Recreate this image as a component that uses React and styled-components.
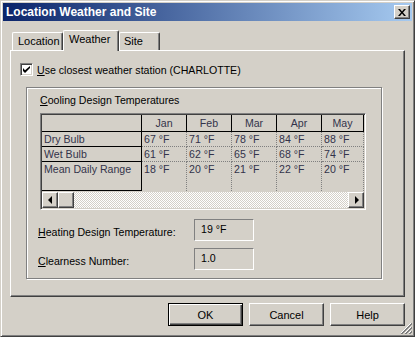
import React from "react";
import styled, { createGlobalStyle, css } from "styled-components";

const face = "#D4D0C8";
const shadow = "#808080";
const dark = "#404040";

const GlobalStyle = createGlobalStyle`
  html, body {
    margin: 0;
    padding: 0;
    background: ${face};
  }
  body {
    font-family: "Liberation Sans", Arial, sans-serif;
    font-size: 10.6px;
    color: #000;
  }
`;

const raised = css`
  background: ${face};
  border: 1px solid;
  border-color: #fff ${dark} ${dark} #fff;
  box-shadow: inset -1px -1px ${shadow};
`;

const months = ["Jan", "Feb", "Mar", "Apr", "May"];
const rows = [
  { label: "Dry Bulb", values: ["67 °F", "71 °F", "78 °F", "84 °F", "88 °F"] },
  { label: "Wet Bulb", values: ["61 °F", "62 °F", "65 °F", "68 °F", "74 °F"] },
  { label: "Mean Daily Range", values: ["18 °F", "20 °F", "21 °F", "22 °F", "20 °F"], tall: true },
];

export default function App() {
  return (
    <>
      <GlobalStyle />
      <Window>
        <TitleBar>
          <Title>Location Weather and Site</Title>
          <CloseButton>
            <svg width="8" height="7" viewBox="0 0 8 7">
              <path d="M0 0h2l2 2.5L6 0h2L5 3.5 8 7H6L4 4.5 2 7H0l3-3.5z" fill="#000" />
            </svg>
          </CloseButton>
        </TitleBar>

        <Body>
          <TabStrip>
            <Tab $width={51}>Location</Tab>
            <Tab $width={56} $active>Weather</Tab>
            <Tab $width={41} $pad={4}>Site</Tab>
          </TabStrip>

          <TabPanel>
            <CheckRow>
              <CheckBox>
                <svg width="7" height="7" viewBox="0 0 7 7">
                  <path d="M0 2v3l2 2 5-5V-0L2 4.2z" fill="#000" />
                </svg>
              </CheckBox>
              <span>
                <u>U</u>se closest weather station (CHARLOTTE)
              </span>
            </CheckRow>

            <GroupBox>
              <Caption>
                <u>C</u>ooling Design Temperatures
              </Caption>

              <GridFrame>
                <GridBody>
                  <HeaderCell $corner />
                  {months.map((m) => (
                    <HeaderCell key={m}>{m}</HeaderCell>
                  ))}
                  {rows.map((r, i) => (
                    <React.Fragment key={r.label}>
                      <RowHeader $tall={r.tall}>{r.label}</RowHeader>
                      {r.values.map((v, j) => (
                        <DataCell key={j} $last={i === rows.length - 1}>
                          {v}
                        </DataCell>
                      ))}
                    </React.Fragment>
                  ))}
                </GridBody>
                <ScrollBar>
                  <ScrollButton>
                    <Arrow $dir="left" />
                  </ScrollButton>
                  <ScrollButton />
                  <ScrollTrack />
                  <ScrollButton>
                    <Arrow $dir="right" />
                  </ScrollButton>
                </ScrollBar>
              </GridFrame>

              <Fields>
                <FieldLabel>
                  <u>H</u>eating Design Temperature:
                </FieldLabel>
                <FieldValue>19 °F</FieldValue>
                <FieldLabel>
                  <u>C</u>learness Number:
                </FieldLabel>
                <FieldValue>1.0</FieldValue>
              </Fields>
            </GroupBox>
          </TabPanel>

          <ButtonRow>
            <Button $default>OK</Button>
            <Button>Cancel</Button>
            <Button>Help</Button>
          </ButtonRow>
        </Body>

        <SizeGrip>
          <svg width="12" height="12" viewBox="0 0 12 12">
            <path d="M11 1L1 11M11 5L5 11M11 9L9 11" stroke="#fff" strokeWidth="1" />
            <path d="M12 1L1 12M12 2L2 12M12 5L5 12M12 6L6 12M12 9L9 12M12 10L10 12" stroke={shadow} strokeWidth="1" />
          </svg>
        </SizeGrip>
      </Window>
    </>
  );
}

const Window = styled("div")`
  position: relative;
  box-sizing: border-box;
  width: 415px;
  height: 337px;
  padding: 2px;
  background: ${face};
  border: 1px solid;
  border-color: ${face} ${dark} ${dark} ${face};
  box-shadow: inset 1px 1px #fff, inset -1px -1px ${shadow};
  display: flex;
  flex-direction: column;
`;

const TitleBar = styled("div")`
  height: 18px;
  display: flex;
  align-items: center;
  justify-content: space-between;
  padding: 0 2px 0 3px;
  background: linear-gradient(to right, #0a246a, #a6caf0);
`;

const Title = styled("span")`
  color: #fff;
  font-weight: bold;
  font-size: 12px;
  white-space: nowrap;
`;

const CloseButton = styled("div")`
  ${raised};
  box-sizing: border-box;
  width: 16px;
  height: 14px;
  display: flex;
  align-items: center;
  justify-content: center;
`;

const Body = styled("div")`
  flex: 1;
  display: flex;
  flex-direction: column;
  padding: 9px 7px 0 7px;
`;

const TabStrip = styled("div")`
  display: flex;
  align-items: flex-end;
  padding-left: 2px;
  height: 20px;
`;

const Tab = styled("div")`
  box-sizing: border-box;
  width: ${(p) => p.$width}px;
  height: ${(p) => (p.$active ? 21 : 18)}px;
  padding: 2px 0 0 ${(p) => p.$pad || 5}px;
  background: ${face};
  border-top: 1px solid #fff;
  border-left: 1px solid #fff;
  border-right: 1px solid ${dark};
  border-radius: 2px 2px 0 0;
  box-shadow: inset -1px 0 ${shadow};
  position: relative;
  z-index: ${(p) => (p.$active ? 2 : 1)};
  margin-bottom: ${(p) => (p.$active ? -1 : 0)}px;
  font-size: 11px;
  white-space: nowrap;
`;

const TabPanel = styled("div")`
  box-sizing: border-box;
  height: 247px;
  padding: 12px 0 0 9px;
  border: 1px solid;
  border-color: #fff ${dark} ${dark} #fff;
  box-shadow: inset -1px -1px ${shadow};
`;

const CheckRow = styled("label")`
  display: flex;
  align-items: center;
  gap: 4px;
  height: 13px;
`;

const CheckBox = styled("span")`
  box-sizing: border-box;
  width: 13px;
  height: 13px;
  background: #fff;
  border: 1px solid;
  border-color: ${shadow} #fff #fff ${shadow};
  box-shadow: inset 1px 1px ${dark}, inset -1px -1px ${face};
  display: flex;
  align-items: center;
  justify-content: center;
`;

const GroupBox = styled("div")`
  box-sizing: border-box;
  width: 356px;
  height: 192px;
  margin: 11px 0 0 6px;
  padding: 6px 0 0 13px;
  border: 1px solid ${shadow};
  box-shadow: inset 1px 1px #fff, 1px 1px #fff;
`;

const Caption = styled("div")`
  height: 13px;
  line-height: 13px;
`;

const GridFrame = styled("div")`
  box-sizing: border-box;
  width: 326px;
  margin-top: 6px;
  border: 1px solid;
  border-color: ${shadow} #fff #fff ${shadow};
  box-shadow: inset 1px 1px ${dark}, inset -1px -1px ${face};
  padding: 1px;
`;

const GridBody = styled("div")`
  display: grid;
  grid-template-columns: 100px 45px 45px 45px 45px 42px;
  grid-template-rows: 17px 15px 15px 29px;
  overflow: hidden;
  color: #33334a;
`;

const HeaderCell = styled("div")`
  box-sizing: border-box;
  border-right: 1px solid #000;
  border-bottom: 1px solid #000;
  text-align: center;
  line-height: 16px;
  white-space: nowrap;
`;

const RowHeader = styled("div")`
  box-sizing: border-box;
  border-right: 1px solid #000;
  border-bottom: 1px solid #000;
  padding-left: 2px;
  line-height: 14px;
  white-space: nowrap;
`;

const DataCell = styled("div")`
  box-sizing: border-box;
  border-right: 1px dotted ${shadow};
  border-bottom: ${(p) => (p.$last ? "none" : `1px dotted ${shadow}`)};
  padding-left: 2px;
  line-height: 14px;
  white-space: nowrap;
`;

const ScrollBar = styled("div")`
  display: flex;
  height: 16px;
  border-top: 1px solid ${face};
`;

const ScrollButton = styled("div")`
  ${raised};
  box-sizing: border-box;
  width: 16px;
  height: 16px;
  display: flex;
  align-items: center;
  justify-content: center;
`;

const ScrollTrack = styled("div")`
  flex: 1;
  background: repeating-conic-gradient(#fff 0% 25%, ${face} 0% 50%) 0 0 / 2px 2px;
`;

const Arrow = styled("span")`
  width: 0;
  height: 0;
  border-top: 4px solid transparent;
  border-bottom: 4px solid transparent;
  ${(p) =>
    p.$dir === "left"
      ? css`
          border-right: 4px solid #000;
          margin-right: 1px;
        `
      : css`
          border-left: 4px solid #000;
          margin-left: 1px;
        `}
`;

const Fields = styled("div")`
  display: grid;
  grid-template-columns: 156px 60px;
  grid-auto-rows: 22px;
  row-gap: 7px;
  margin: 9px 0 0 -2px;
  align-items: center;
`;

const FieldLabel = styled("div")`
  padding-top: 4px;
`;

const FieldValue = styled("div")`
  box-sizing: border-box;
  height: 22px;
  padding: 3px 0 0 6px;
  border: 1px solid;
  border-color: ${shadow} #fff #fff ${shadow};
`;

const ButtonRow = styled("div")`
  display: flex;
  justify-content: flex-end;
  gap: 6px;
  margin-top: 6px;
`;

const Button = styled("div")`
  ${raised};
  box-sizing: border-box;
  width: 75px;
  height: 23px;
  display: flex;
  align-items: center;
  justify-content: center;
  font-size: 11px;
  ${(p) =>
    p.$default &&
    css`
      border-color: #000;
      box-shadow: inset 1px 1px #fff, inset -1px -1px ${dark}, inset -2px -2px ${shadow};
    `}
`;

const SizeGrip = styled("div")`
  position: absolute;
  right: 2px;
  bottom: 2px;
  width: 12px;
  height: 12px;
  line-height: 0;
`;
